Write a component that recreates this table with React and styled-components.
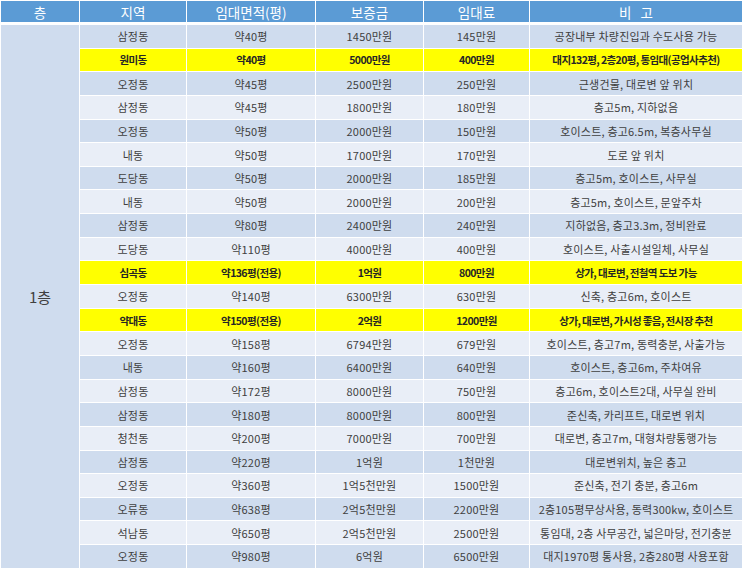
import React from 'react'
import styled, { createGlobalStyle } from 'styled-components'

const GlobalStyle = createGlobalStyle`
  body {
    margin: 0;
    background: #ffffff;
    font-family: "Noto Sans CJK KR", "Noto Sans", sans-serif;
  }
`

const COLS = '78px 106px 128px 107px 105px 212px'

const Wrap = styled.div`
  padding: 1px;
  background: #ffffff;
`

const HeadRow = styled.div`
  display: grid;
  grid-template-columns: ${COLS};
  column-gap: 1px;
  height: 21px;
`

const HeadCell = styled.div`
  background: #5b9bd5;
  color: #ffffff;
  font-size: 13.5px;
  display: flex;
  align-items: center;
  justify-content: center;
  white-space: pre;
`

const Body = styled.div`
  display: grid;
  grid-template-columns: ${COLS};
  grid-template-rows: repeat(23, 22.65px);
  gap: 1px;
  margin-top: 3px;
`

const FloorCell = styled.div`
  grid-column: 1;
  grid-row: 1 / span 23;
  background: #cfdcee;
  color: #404040;
  font-size: 15px;
  display: flex;
  align-items: center;
  justify-content: center;
`

const Cell = styled.div`
  background: ${p => (p.$hl ? '#ffff00' : p.$dark ? '#cfdcee' : '#e9eef7')};
  color: ${p => (p.$hl ? '#262626' : '#404040')};
  font-weight: ${p => (p.$hl ? 700 : 400)};
  font-size: ${p => (p.$hl ? '10.5px' : '11px')};
  letter-spacing: ${p => (p.$hl ? '-0.6px' : '0.2px')};
  display: flex;
  align-items: center;
  justify-content: center;
  white-space: nowrap;
`

const rows = [
  ['삼정동', '약40평', '1450만원', '145만원', '공장내부 차량진입과 수도사용 가능'],
  ['원미동', '약40평', '5000만원', '400만원', '대지132평, 2층20평, 통임대(공업사추천)', true],
  ['오정동', '약45평', '2500만원', '250만원', '근생건물, 대로변 앞 위치'],
  ['삼정동', '약45평', '1800만원', '180만원', '층고5m, 지하없음'],
  ['오정동', '약50평', '2000만원', '150만원', '호이스트, 층고6.5m, 복층사무실'],
  ['내동', '약50평', '1700만원', '170만원', '도로 앞 위치'],
  ['도당동', '약50평', '2000만원', '185만원', '층고5m, 호이스트, 사무실'],
  ['내동', '약50평', '2000만원', '200만원', '층고5m, 호이스트, 문앞주차'],
  ['삼정동', '약80평', '2400만원', '240만원', '지하없음, 층고3.3m, 정비완료'],
  ['도당동', '약110평', '4000만원', '400만원', '호이스트, 사출시설일체, 사무실'],
  ['심곡동', '약136평(전용)', '1억원', '800만원', '상가, 대로변, 전철역 도보 가능', true],
  ['오정동', '약140평', '6300만원', '630만원', '신축, 층고6m, 호이스트'],
  ['약대동', '약150평(전용)', '2억원', '1200만원', '상가, 대로변, 가시성 좋음, 전시장 추천', true],
  ['오정동', '약158평', '6794만원', '679만원', '호이스트, 층고7m, 동력충분, 사출가능'],
  ['내동', '약160평', '6400만원', '640만원', '호이스트, 층고6m, 주차여유'],
  ['삼정동', '약172평', '8000만원', '750만원', '층고6m, 호이스트2대, 사무실 완비'],
  ['삼정동', '약180평', '8000만원', '800만원', '준신축, 카리프트, 대로변 위치'],
  ['청천동', '약200평', '7000만원', '700만원', '대로변, 층고7m, 대형차량통행가능'],
  ['삼정동', '약220평', '1억원', '1천만원', '대로변위치, 높은 층고'],
  ['오정동', '약360평', '1억5천만원', '1500만원', '준신축, 전기 충분, 층고6m'],
  ['오류동', '약638평', '2억5천만원', '2200만원', '2층105평무상사용, 동력300kw, 호이스트'],
  ['석남동', '약650평', '2억5천만원', '2500만원', '통임대, 2층 사무공간, 넓은마당, 전기충분'],
  ['오정동', '약980평', '6억원', '6500만원', '대지1970평 통사용, 2층280평 사용포함']
]

const heads = ['층', '지역', '임대면적(평)', '보증금', '임대료', '비   고']

export default function App () {
  return (
    <Wrap>
      <GlobalStyle />
      <HeadRow>
        {heads.map(h => <HeadCell key={h}>{h}</HeadCell>)}
      </HeadRow>
      <Body>
        <FloorCell>1층</FloorCell>
        {rows.map((r, i) =>
          r.slice(0, 5).map((v, j) => (
            <Cell key={i + '-' + j} $hl={r[5]} $dark={i % 2 === 0}>{v}</Cell>
          ))
        )}
      </Body>
    </Wrap>
  )
}
